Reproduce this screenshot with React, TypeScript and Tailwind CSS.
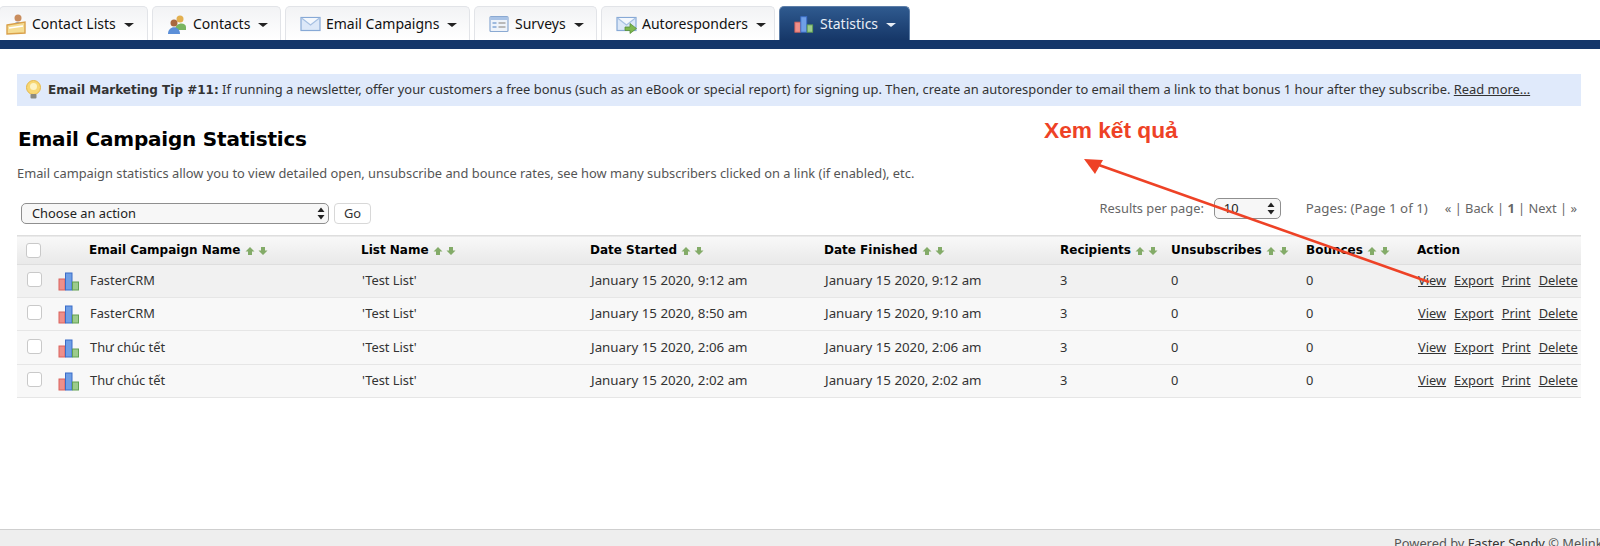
import React from 'react';

const bold = "font-['DejaVu_Sans','Noto_Sans',sans-serif] font-bold";

function ChartIcon({ size = 22 }: { size?: number }) {
    return (
        <svg width={size} height={size} viewBox="0 0 22 22">
            <rect x="1" y="9" width="6" height="11" fill="#ef8f8a" stroke="#d9635c" strokeWidth="1" />
            <rect x="7.5" y="3" width="6.5" height="17" fill="#6f9fe6" stroke="#3a6cc8" strokeWidth="1" />
            <rect x="14.5" y="12" width="6" height="8" fill="#9ccb8c" stroke="#62a052" strokeWidth="1" />
        </svg>
    );
}

function ContactListIcon() {
    return (
        <svg width="20" height="22" viewBox="0 0 20 22">
            <circle cx="12" cy="5" r="3.5" fill="#c98d5e" />
            <path d="M7 13 C7 8 17 8 18 13 L18 15 L7 15 Z" fill="#5b86c8" />
            <path d="M1 12 L19 9 L19 20 L1 21 Z" fill="#f5dd93" stroke="#d9a04a" strokeWidth="1.4" />
            <path d="M3 15 L17 13" stroke="#ffffff" strokeWidth="1.4" />
        </svg>
    );
}

function ContactsIcon() {
    return (
        <svg width="20" height="22" viewBox="0 0 20 22">
            <circle cx="13" cy="6" r="3.5" fill="#e3b04f" />
            <path d="M8 17 C8 9 19 9 19 14 L19 17 Z" fill="#79b560" />
            <circle cx="7" cy="10" r="3.5" fill="#a9683f" />
            <path d="M1 21 C1 12 13 12 13 21 Z" fill="#5b8fd8" />
        </svg>
    );
}

function MailIcon({ arrow = false }: { arrow?: boolean }) {
    return (
        <svg width="21" height="22" viewBox="0 0 21 22">
            <rect x="1" y="4.5" width="19" height="13" fill="#dce8f8" stroke="#87a9d6" strokeWidth="1.2" />
            <path d="M1.5 5 L10.5 12 L19.5 5" fill="#f4f8fd" stroke="#a6c0e2" strokeWidth="1.2" />
            {arrow && <path d="M9 14 H14 V10.5 L20.5 15.5 L14 20.5 V17.5 H9 Z" fill="#7fb84e" stroke="#57913a" strokeWidth="0.8" />}
        </svg>
    );
}

function SurveyIcon() {
    return (
        <svg width="20" height="22" viewBox="0 0 20 22">
            <rect x="1" y="3.5" width="18" height="15" rx="1" fill="#eef3fa" stroke="#8aa9d2" strokeWidth="1.2" />
            <rect x="1.5" y="4" width="17" height="3" fill="#a9c3e6" />
            <rect x="3.5" y="9" width="4" height="2" fill="#9db9de" />
            <rect x="3.5" y="13" width="4" height="2" fill="#9db9de" />
            <path d="M9.5 10 H16.5 M9.5 14 H16.5" stroke="#b9b9b9" strokeWidth="2" />
        </svg>
    );
}

function BulbIcon() {
    return (
        <svg width="19" height="20" viewBox="0 0 19 20">
            <circle cx="9.5" cy="7.5" r="7" fill="#f7d774" stroke="#e6b84a" strokeWidth="1" />
            <circle cx="9.5" cy="6.5" r="3.5" fill="#fdf3c4" />
            <rect x="6.5" y="14" width="6" height="4.5" rx="1" fill="#8a8a80" />
        </svg>
    );
}

function SortArrows() {
    return (
        <span className="ml-1 inline-flex items-center gap-[3px] align-middle">
            <svg width="10" height="10" viewBox="0 0 10 10">
                <path d="M5 1 L9.5 5.5 H7 V9 H3 V5.5 H0.5 Z" fill="#83ab68" />
            </svg>
            <svg width="10" height="10" viewBox="0 0 10 10">
                <path d="M3 1 H7 V4.5 H9.5 L5 9 L0.5 4.5 H3 Z" fill="#83ab68" />
            </svg>
        </span>
    );
}

function Tab({ label, icon, active, className }: { label: string; icon: React.ReactNode; active?: boolean; className: string }) {
    return (
        <div
            className={`flex h-[34px] items-center rounded-t-[5px] border border-b-0 text-[14px] ${className} ${
                active
                    ? 'border-[#5d7ea8] bg-gradient-to-b from-[#2f5a8f] to-[#163768] text-[#e8eef6]'
                    : 'border-[#e2e4e8] bg-gradient-to-b from-[#f2f3f5] to-white text-[#111]'
            }`}
        >
            <span className="flex w-[22px] shrink-0 justify-center">{icon}</span>
            <span className="ml-[5px] whitespace-nowrap">{label}</span>
            <span className={`ml-[8px] mt-[2px] h-0 w-0 border-x-[5px] border-t-[4px] border-x-transparent ${active ? 'border-t-[#e8eef6]' : 'border-t-[#222]'}`}></span>
        </div>
    );
}

function Stepper() {
    return (
        <svg width="8" height="13" viewBox="0 0 8 13">
            <path d="M4 0.5 L7.5 5 H0.5 Z M4 12.5 L0.5 8 H7.5 Z" fill="#222" />
        </svg>
    );
}

const rows = [
    { name: 'FasterCRM', started: 'January 15 2020, 9:12 am', finished: 'January 15 2020, 9:12 am', cls: 'h-[33px] bg-[#f1f1f1]' },
    { name: 'FasterCRM', started: 'January 15 2020, 8:50 am', finished: 'January 15 2020, 9:10 am', cls: 'h-[33px] bg-[#f8f8f8]' },
    { name: 'Thư chúc tết', started: 'January 15 2020, 2:06 am', finished: 'January 15 2020, 2:06 am', cls: 'h-[34px] bg-[#f8f8f8]' },
    { name: 'Thư chúc tết', started: 'January 15 2020, 2:02 am', finished: 'January 15 2020, 2:02 am', cls: 'h-[33px] bg-[#f8f8f8]' },
];

const headers = [
    { label: 'Email Campaign Name', sort: true },
    { label: 'List Name', sort: true },
    { label: 'Date Started', sort: true },
    { label: 'Date Finished', sort: true },
    { label: 'Recipients', sort: true },
    { label: 'Unsubscribes', sort: true },
    { label: 'Bounces', sort: true },
    { label: 'Action', sort: false },
];

export default function App() {
    return (
        <div className="relative flex h-[546px] flex-col overflow-hidden bg-white font-['Noto_Sans',sans-serif] text-[12.85px] text-[#333]">
            <div className="flex gap-[4px] pt-[6px]">
                <Tab label="Contact Lists" icon={<ContactListIcon />} className="-ml-[1px] w-[149px] pl-[5px]" />
                <Tab label="Contacts" icon={<ContactsIcon />} className="w-[129px] pl-[13px]" />
                <Tab label="Email Campaigns" icon={<MailIcon />} className="w-[185px] pl-[13px]" />
                <Tab label="Surveys" icon={<SurveyIcon />} className="w-[123px] pl-[13px]" />
                <Tab label="Autoresponders" icon={<MailIcon arrow />} className="w-[174px] pl-[13px]" />
                <Tab label="Statistics" icon={<ChartIcon size={20} />} active className="w-[131px] pl-[13px]" />
            </div>
            <div className="h-[9px] bg-[#15376a]"></div>

            <div className="ml-[17px] mr-[19px] mt-[25px] flex h-[32px] items-center bg-[#e0eafb] pl-[7px] text-[#333]">
                <BulbIcon />
                <span className="ml-[5px] whitespace-nowrap text-[12.9px]">
                    <b className={`${bold} text-[12px]`}>Email Marketing Tip #11:</b> If running a newsletter, offer your customers a free bonus (such as an eBook or special report) for signing up. Then, create an autoresponder to email them a link to that bonus 1 hour after they subscribe. <u>Read more...</u>
                </span>
            </div>

            <h1 className={`${bold} ml-[18px] mt-[19px] text-[20px] leading-[28px] tracking-[-0.2px] text-black`}>Email Campaign Statistics</h1>
            <p className="ml-[17px] mt-[12px] leading-[16px] text-[#555]">
                Email campaign statistics allow you to view detailed open, unsubscribe and bounce rates, see how many subscribers clicked on a link (if enabled), etc.
            </p>

            <div className="ml-[21px] mr-[23px] mt-[17px] flex h-[37px] items-start justify-between">
                <div className="mt-[5px] flex items-center gap-[5px]">
                    <div className="flex h-[21px] w-[308px] items-center justify-between rounded-[5px] border border-[#8f8f8f] bg-[#f7f7f7] pl-[10px] pr-[3px] text-[#222]">
                        Choose an action
                        <Stepper />
                    </div>
                    <div className="flex h-[21px] w-[37px] items-center justify-center rounded-[4px] border border-[#d8d8d8] bg-white text-[#333]">Go</div>
                </div>
                <div className="flex items-center text-[#666]">
                    <span>Results per page:</span>
                    <div className="ml-[10px] flex h-[21px] w-[67px] items-center justify-between rounded-[5px] border border-[#8f8f8f] bg-[#f7f7f7] pl-[9px] pr-[5px] text-[#222]">
                        10
                        <Stepper />
                    </div>
                    <span className="ml-[25px] text-[13.3px]">Pages: (Page 1 of 1)</span>
                    <span className="ml-[17px]">« | Back | <b>1</b> | Next | »</span>
                </div>
            </div>

            <table className="ml-[17px] mr-[19px] w-[1564px] table-fixed border-collapse">
                <colgroup>
                    <col className="w-[41px]" />
                    <col className="w-[31px]" />
                    <col className="w-[272px]" />
                    <col className="w-[229px]" />
                    <col className="w-[234px]" />
                    <col className="w-[236px]" />
                    <col className="w-[111px]" />
                    <col className="w-[135px]" />
                    <col className="w-[111px]" />
                    <col className="w-[164px]" />
                </colgroup>
                <thead>
                    <tr className="h-[29px] border-y border-[#dedede] bg-gradient-to-b from-[#f8f8f8] to-[#e9e9e9]">
                        <th className="pl-[9px] text-left">
                            <span className="block h-[15px] w-[15px] rounded-[3px] border border-[#c9c9c9] bg-white"></span>
                        </th>
                        <th></th>
                        {headers.map((h) => (
                            <th key={h.label} className={`${bold} whitespace-nowrap text-left text-[12px] text-black`}>
                                {h.label}
                                {h.sort && <SortArrows />}
                            </th>
                        ))}
                    </tr>
                </thead>
                <tbody>
                    {rows.map((r, i) => (
                        <tr key={i} className={`${r.cls} border-b border-[#e6e6e6] text-[#333]`}>
                            <td className="pl-[10px]">
                                <span className="-mt-[3px] block h-[15px] w-[15px] rounded-[3px] border border-[#c9c9c9] bg-white"></span>
                            </td>
                            <td>
                                <ChartIcon />
                            </td>
                            <td className="pl-[1px]">{r.name}</td>
                            <td className="pl-[1px]">'Test List'</td>
                            <td className="pl-[1px] text-[13.3px]">{r.started}</td>
                            <td className="pl-[1px] text-[13.3px]">{r.finished}</td>
                            <td>3</td>
                            <td>0</td>
                            <td>0</td>
                            <td className="whitespace-nowrap pl-[1px]">
                                <span className="flex gap-[8px] underline">
                                    <span>View</span>
                                    <span>Export</span>
                                    <span>Print</span>
                                    <span>Delete</span>
                                </span>
                            </td>
                        </tr>
                    ))}
                </tbody>
            </table>

            <div className="mt-auto h-[17px] overflow-hidden whitespace-nowrap border-t border-[#cfcfcf] bg-[#eeeeee] pl-[1394px] pt-[6px] leading-[14px] text-[#555]">
                Powered by <span className="text-[#333]">Faster Sendy</span> © Melink
            </div>

            <div className="absolute left-[1044px] top-[115px] font-['Liberation_Sans',sans-serif] text-[22.7px] font-bold leading-[30px] text-[#ee4226]">Xem kết quả</div>
            <svg className="pointer-events-none absolute left-0 top-0" width="1600" height="546">
                <path d="M1429 282 L1096 164" stroke="#ee4226" strokeWidth="2.6" fill="none" />
                <path d="M1084 159 L1103 160 L1095 174 Z" fill="#ee4226" />
            </svg>
        </div>
    );
}
